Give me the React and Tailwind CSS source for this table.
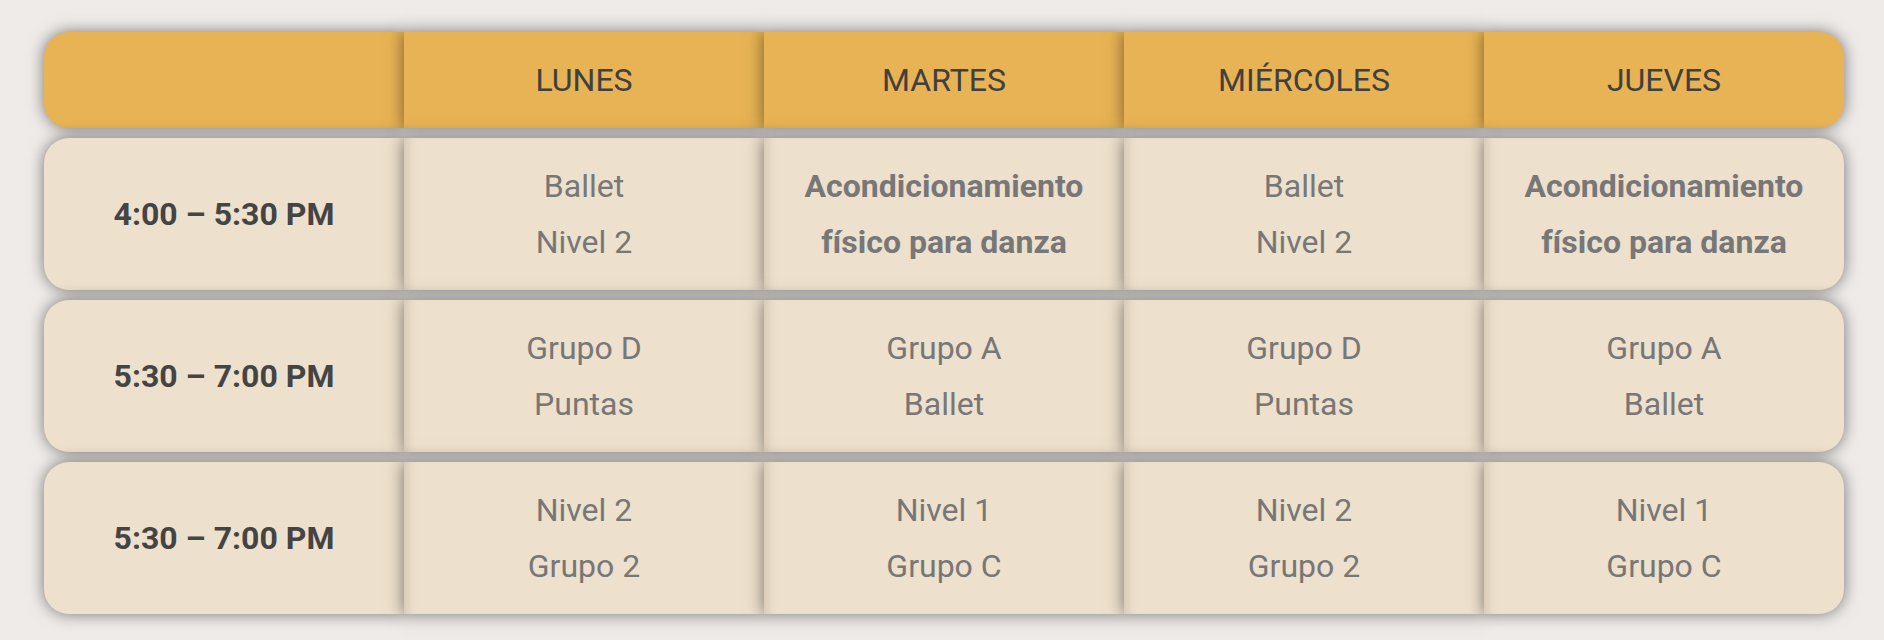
import React from "react";

const days = ["LUNES", "MARTES", "MIÉRCOLES", "JUEVES"];

const rows = [
  {
    time: "4:00 – 5:30 PM",
    cells: [
      { lines: ["Ballet", "Nivel 2"] },
      { lines: ["Acondicionamiento", "físico para danza"], bold: true },
      { lines: ["Ballet", "Nivel 2"] },
      { lines: ["Acondicionamiento", "físico para danza"], bold: true },
    ],
  },
  {
    time: "5:30 – 7:00 PM",
    cells: [
      { lines: ["Grupo D", "Puntas"] },
      { lines: ["Grupo A", "Ballet"] },
      { lines: ["Grupo D", "Puntas"] },
      { lines: ["Grupo A", "Ballet"] },
    ],
  },
  {
    time: "5:30 – 7:00 PM",
    cells: [
      { lines: ["Nivel 2", "Grupo 2"] },
      { lines: ["Nivel 1", "Grupo C"] },
      { lines: ["Nivel 2", "Grupo 2"] },
      { lines: ["Nivel 1", "Grupo C"] },
    ],
  },
];

const cellBase =
  "w-[360px] flex flex-col items-center justify-center text-center shadow-[0_0_16px_rgba(0,0,0,0.5)]";
const bodyCell =
  "w-[360px] flex flex-col items-center justify-center text-center shadow-[0_0_16px_rgba(0,0,0,0.5),inset_10px_0_12px_-8px_rgba(0,0,0,0.14)]";

export default function App() {
  return (
    <div
      className="min-h-[640px] w-full bg-[#eeebe8] pl-[44px] pt-[32px] text-[32px] leading-[56px]"
      style={{ fontFamily: "Roboto, 'Liberation Sans', sans-serif" }}
    >
      <div className="flex flex-col gap-[10px] w-[1800px]">
        <div className="flex h-[96px]">
          <div className={`${cellBase} bg-[#e7b354] rounded-l-[25px]`}></div>
          {days.map((d, i) => (
            <div
              key={d}
              className={`${cellBase} bg-[#e7b354] text-[#404040] ${
                i === days.length - 1 ? "rounded-r-[25px]" : ""
              }`}
            >
              {d}
            </div>
          ))}
        </div>
        {rows.map((r, ri) => (
          <div key={ri} className="flex h-[152px]">
            <div
              className={`${cellBase} bg-[#ede0cc] rounded-l-[25px] font-bold text-[#444444]`}
            >
              {r.time}
            </div>
            {r.cells.map((c, ci) => (
              <div
                key={ci}
                className={`${bodyCell} bg-[#ede0cc] text-[#777777] ${
                  c.bold ? "font-bold" : ""
                } ${ci === r.cells.length - 1 ? "rounded-r-[25px]" : ""}`}
              >
                {c.lines.map((l, li) => (
                  <div key={li}>{l}</div>
                ))}
              </div>
            ))}
          </div>
        ))}
      </div>
    </div>
  );
}
